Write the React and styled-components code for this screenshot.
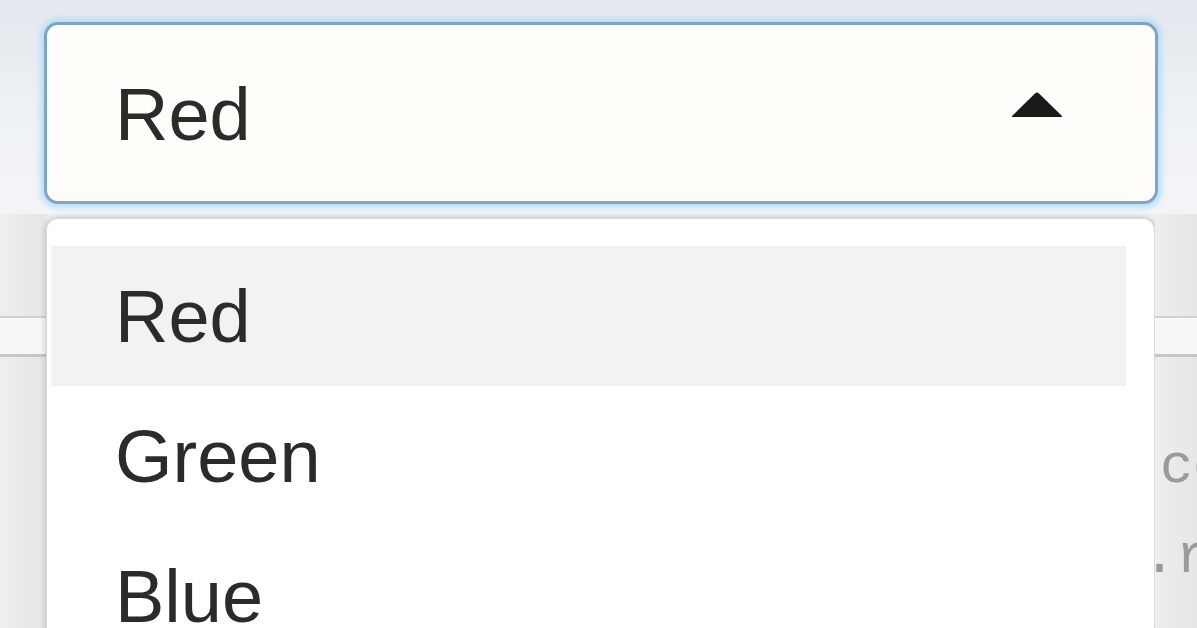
import React from 'react'
import styled, { createGlobalStyle } from 'styled-components'

const Global = createGlobalStyle`
  html, body {
    margin: 0;
    padding: 0;
    background: #ececec;
    overflow: hidden;
  }
  body {
    font-family: 'Liberation Sans', Arial, sans-serif;
  }
`

const Page = styled.div`
  width: 1197px;
  height: 628px;
  display: flex;
  flex-direction: column;
  overflow: hidden;
`

const Header = styled.div`
  background: linear-gradient(180deg, #e3e8ee 0%, #eef2f6 55%, #f3f4f6 100%);
  padding: 22px 39px 10px 44px;
`

const SelectBox = styled.div`
  height: 182px;
  box-sizing: border-box;
  border: 3px solid #80a4c8;
  border-radius: 14px;
  background: #fffdfa;
  box-shadow: 0 0 5px 4px rgba(175, 220, 248, 0.8);
  display: flex;
  align-items: center;
  justify-content: space-between;
  padding: 0 92px 0 68px;
`

const Label = styled.span`
  font-size: 74px;
  color: #2b2b2b;
  line-height: 1;
  margin-top: 4px;
`

const Arrow = styled.svg`
  width: 52px;
  height: 27px;
  margin-bottom: 17px;
`

const Lower = styled.div`
  flex: 1;
  display: grid;
  grid-template-columns: 46px 1109px 1fr;
  min-height: 0;
`

const Gutter = styled.div`
  background: linear-gradient(90deg, #eeeeee, #e6e6e6);
  padding-top: 102px;
  overflow: hidden;
`

const Band = styled.div`
  height: 41px;
  box-sizing: border-box;
  border-top: 2px solid #d0d0d0;
  border-bottom: 3px solid #c6c6c6;
  background: #f7f7f7;
  margin-bottom: 66px;
`

const CodeLine = styled.div`
  font-family: 'Liberation Mono', 'Courier New', monospace;
  font-size: 55px;
  line-height: 90px;
  color: #9a9a9a;
  white-space: pre;
  margin-left: ${p => p.$indent}px;
`

const Menu = styled.ul`
  list-style: none;
  margin: 4px 0 0;
  padding: 27px 28px 0 4px;
  background: #ffffff;
  border: 1px solid #d9d9d9;
  border-bottom: none;
  border-radius: 12px 12px 0 0;
  box-shadow: -2px 0 5px rgba(0, 0, 0, 0.12), 2px 0 4px rgba(0, 0, 0, 0.08);
`

const Option = styled.li`
  height: 140px;
  display: flex;
  align-items: center;
  padding-left: 64px;
  font-size: 74px;
  color: #2b2b2b;
  background: ${p => (p.$active ? '#f2f2f2' : 'transparent')};
`

const options = ['Red', 'Green', 'Blue']

const App = () => {
  return (
    <>
      <Global />
      <Page>
        <Header>
          <SelectBox>
            <Label>Red</Label>
            <Arrow viewBox="0 0 52 27">
              <path d="M24 2.5 Q26 0.5 28 2.5 L51 25 Q51.5 26 50 26 L2 26 Q0.5 26 1 25 Z" fill="#1a1a1a" />
            </Arrow>
          </SelectBox>
        </Header>
        <Lower>
          <Gutter>
            <Band />
          </Gutter>
          <Menu>
            {options.map((o, i) => (
              <Option key={o} $active={i === 0}>
                {o}
              </Option>
            ))}
          </Menu>
          <Gutter>
            <Band />
            <CodeLine $indent={-28}>tco</CodeLine>
            <CodeLine $indent={-12}>.r</CodeLine>
          </Gutter>
        </Lower>
      </Page>
    </>
  )
}

export default App
